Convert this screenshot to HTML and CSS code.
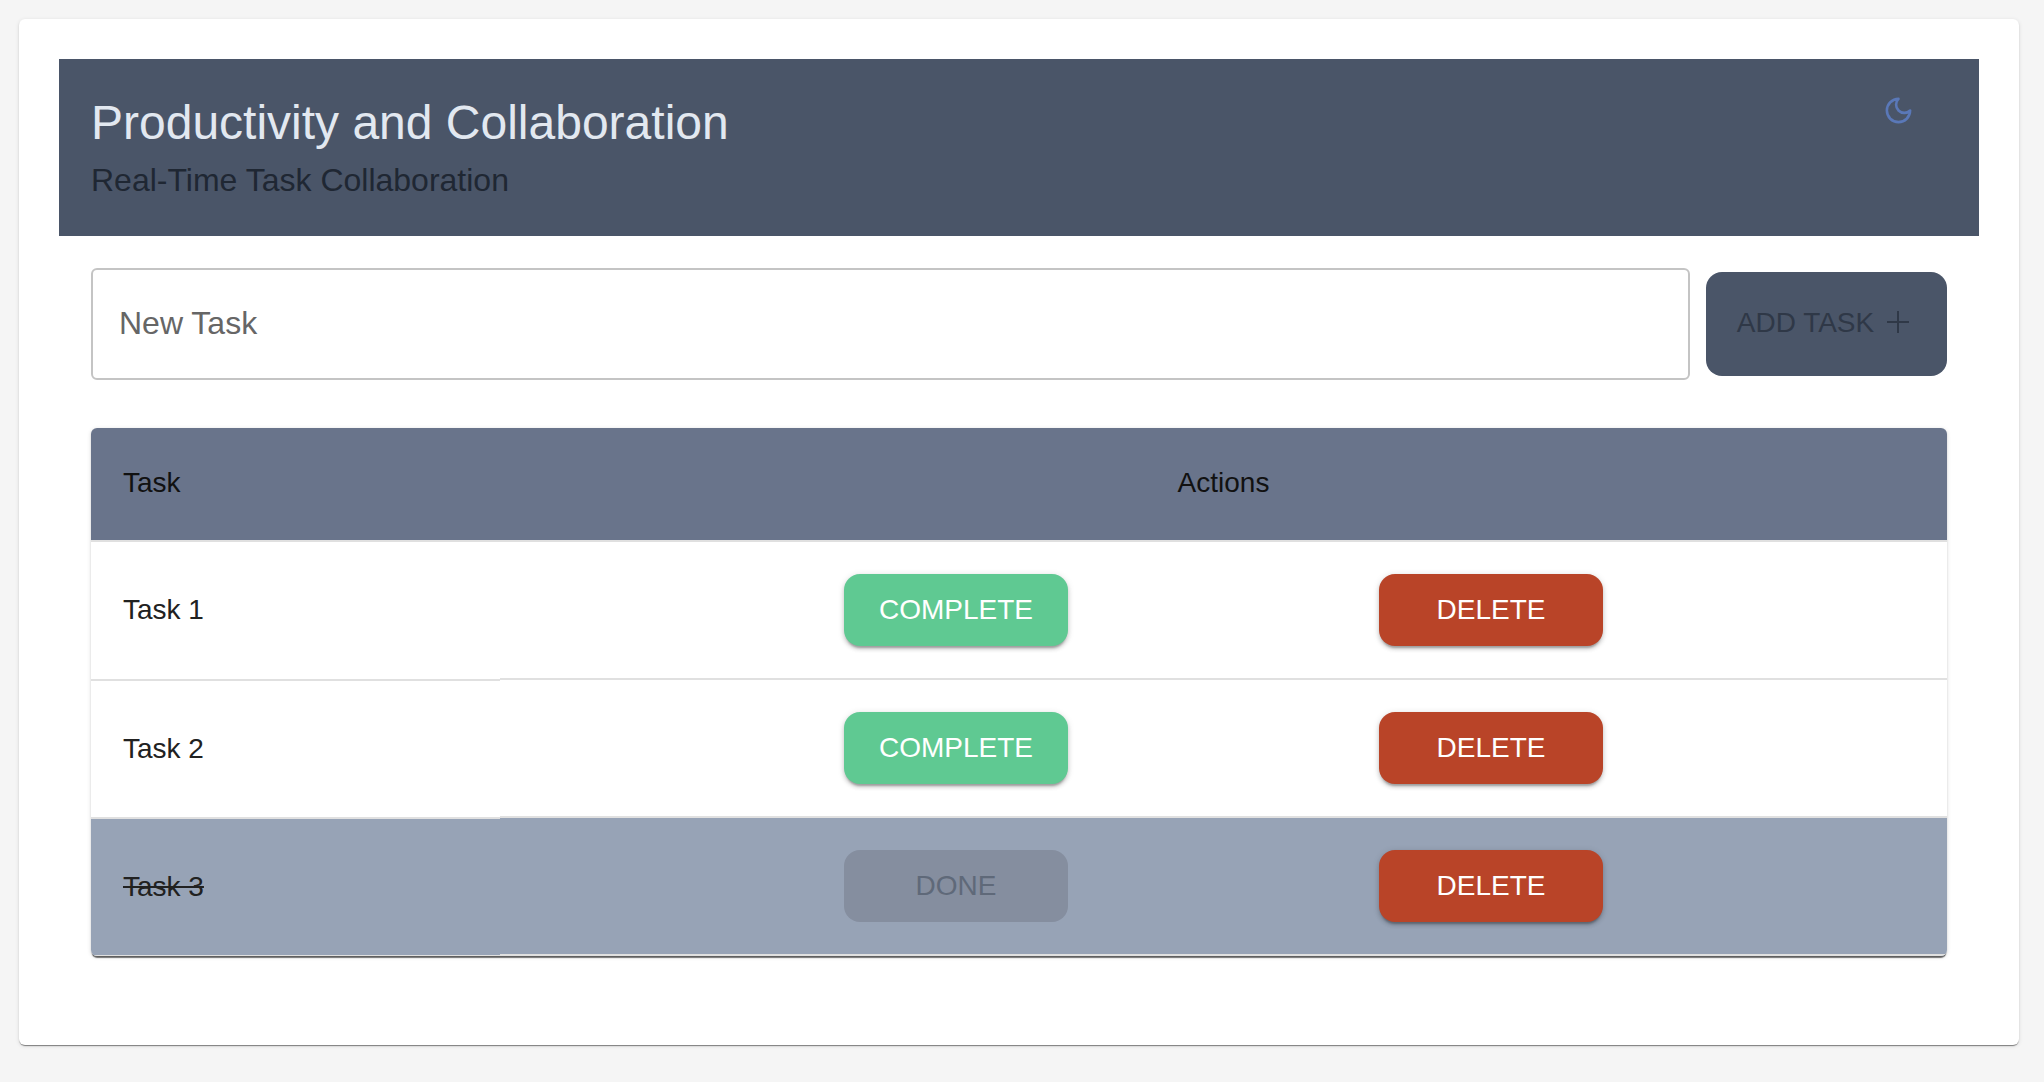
FILE: index.html
```html
<!DOCTYPE html>
<html lang="en">
<head>
<meta charset="utf-8">
<title>Productivity and Collaboration</title>
<link rel="stylesheet" href="styles.css">
</head>
<body>
<main class="card">
  <header class="banner">
    <div class="banner-text">
      <h1 class="title">Productivity and Collaboration</h1>
      <p class="subtitle">Real-Time Task Collaboration</p>
    </div>
    <button class="theme-toggle" type="button" aria-label="Toggle dark mode">
      <svg class="moon" viewBox="0 0 24 24" fill="none" stroke="currentColor" stroke-width="2" stroke-linecap="round" stroke-linejoin="round"><path d="M12 3a6 6 0 0 0 9 9 9 9 0 1 1-9-9Z"/></svg>
    </button>
  </header>
  <section class="content">
    <form class="add-row">
      <input class="task-input" type="text" placeholder="New Task">
      <button class="btn add-btn" type="button" disabled>ADD TASK
        <svg class="plus" viewBox="0 0 22 22" fill="none" stroke="currentColor" stroke-width="2"><path d="M11 0V22M0 11H22"/></svg>
      </button>
    </form>
    <div class="table-wrap">
      <table class="tasks">
        <thead>
          <tr><th class="col-task">Task</th><th class="col-actions">Actions</th></tr>
        </thead>
        <tbody>
          <tr>
            <td class="col-task">Task 1</td>
            <td class="col-actions"><div class="actions"><button class="btn complete" type="button">COMPLETE</button><button class="btn delete" type="button">DELETE</button></div></td>
          </tr>
          <tr>
            <td class="col-task">Task 2</td>
            <td class="col-actions"><div class="actions"><button class="btn complete" type="button">COMPLETE</button><button class="btn delete" type="button">DELETE</button></div></td>
          </tr>
          <tr class="done-row">
            <td class="col-task"><span class="struck">Task 3</span></td>
            <td class="col-actions"><div class="actions"><button class="btn done" type="button" disabled>DONE</button><button class="btn delete" type="button">DELETE</button></div></td>
          </tr>
        </tbody>
      </table>
    </div>
  </section>
</main>
</body>
</html>
```
FILE: styles.css
```css
* { box-sizing: border-box; }
html, body { margin: 0; height: 100%; }
body {
  background: #f5f5f5;
  padding: 19px 25px 37px 19px;
  font-family: "Liberation Sans", Arial, sans-serif;
}
.card {
  height: 1026px;
  background: #fff;
  border-radius: 6px;
  padding: 40px;
  box-shadow: 0 2px 1px -1px rgba(0,0,0,.3), 0 1px 1px rgba(0,0,0,.2), 0 1px 4px rgba(0,0,0,.12);
}
.banner {
  height: 177px;
  background: #4a5568;
  padding: 34px 32px 0;
  display: flex;
  justify-content: space-between;
  align-items: flex-start;
}
.title {
  margin: 0;
  font-size: 48px;
  font-weight: 400;
  line-height: 60px;
  color: #e2e8f0;
}
.subtitle {
  margin: 7px 0 0;
  font-size: 32px;
  line-height: 40px;
  color: #1f2733;
}
.theme-toggle {
  width: 31px;
  height: 31px;
  padding: 0;
  margin: 2px 33px 0 0;
  border: 0;
  background: none;
  color: #5a78b8;
}
.moon { display: block; width: 31px; height: 31px; }
.content { padding: 0 32px; }
.add-row {
  display: flex;
  align-items: center;
  gap: 16px;
  padding-top: 32px;
  margin-bottom: 48px;
}
.task-input {
  flex: 1;
  height: 112px;
  border: 2px solid #c4c4c4;
  border-radius: 6px;
  padding: 0 26px 1px;
  font: 32px "Liberation Sans", Arial, sans-serif;
  color: #333;
  outline: none;
}
.task-input::placeholder { color: #666; opacity: 1; }
.btn {
  width: 224px;
  height: 72px;
  border: 0;
  border-radius: 16px;
  font: 28px "Liberation Sans", Arial, sans-serif;
  color: #fff;
  display: flex;
  align-items: center;
  justify-content: center;
  box-shadow: 0 4px 2px -2px rgba(0,0,0,.22), 0 3px 4px rgba(0,0,0,.16), 0 1px 7px rgba(0,0,0,.12);
}
.add-btn {
  width: 241px;
  height: 104px;
  padding: 0 7px 2px 0;
  background: #4a5568;
  color: #2f3847;
  gap: 13px;
  box-shadow: none;
}
.plus { width: 22px; height: 22px; margin-top: -3px; }
.complete { background: #5fc992; }
.delete { background: #b94428; }
.done {
  background: #858e9f;
  color: #5f6979;
  box-shadow: none;
}
.table-wrap {
  border-radius: 6px;
  box-shadow: 0 3px 1px -1px rgba(0,0,0,.5), 0 1px 1px rgba(0,0,0,.2), 0 1px 4px rgba(0,0,0,.15);
  overflow: hidden;
}
.tasks {
  width: 100%;
  border-collapse: separate;
  border-spacing: 0;
  table-layout: fixed;
  font-size: 28px;
  color: #212121;
}
.tasks th, .tasks td {
  padding: 0 32px;
  font-weight: 400;
  border-bottom: 2px solid #e0e0e0;
}
.tasks th { height: 114px; padding-bottom: 2px; background: #69748b; color: #111; }
.tasks td { height: 138px; position: relative; }
.tasks tbody tr + tr td.col-task { padding-top: 2px; }
.tasks .col-task { width: 409px; text-align: left; }
.tasks .col-actions { text-align: center; }
.tasks td.col-task { border-bottom-color: transparent; }
.tasks td.col-task::after {
  content: "";
  position: absolute;
  left: 0;
  right: 0;
  bottom: -3px;
  height: 2px;
  background: #e0e0e0;
  z-index: 1;
}
.done-row td { background: #97a3b6; }
.struck { text-decoration: line-through; }
.actions {
  display: flex;
  justify-content: center;
  gap: 311px;
}
```
